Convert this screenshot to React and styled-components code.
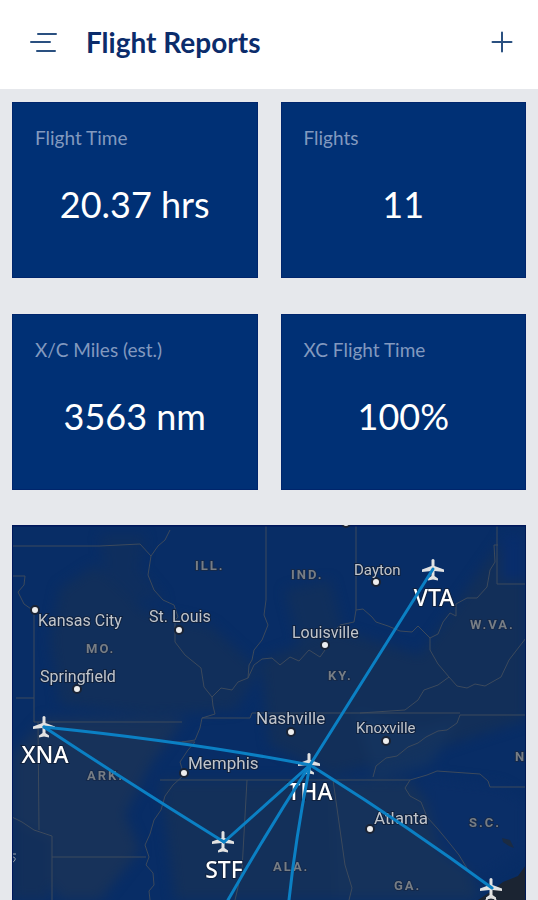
import React from "react";
import styled, { createGlobalStyle } from "styled-components";

const GlobalStyle = createGlobalStyle`
  * { box-sizing: border-box; }
  body {
    margin: 0;
    background: #e6e8ec;
    font-family: Lato, "Open Sans", sans-serif;
  }
`;

const Header = styled.header`
  display: flex;
  align-items: center;
  height: 89px;
  padding: 0 24px 6px 28px;
  background: #fff;
  color: #0b2c6b;
`;

const IconButton = styled.button`
  display: flex;
  padding: 0;
  border: 0;
  background: none;
  color: #2a5080;
  cursor: pointer;
`;

const Title = styled.h1`
  flex: 1;
  margin: 0 0 0 26px;
  font-size: 28px;
  line-height: 32px;
  font-weight: 700;
`;

const Main = styled.main`
  padding: 13px 12px 0;
`;

const Stats = styled.section`
  display: grid;
  grid-template-columns: 1fr 1fr;
  gap: 36px 23px;
  margin-bottom: 35px;
`;

const Card = styled.article`
  min-height: 176px;
  padding: 23px 22px;
  background: #003075;
  border: 1px solid #00256c;
`;

const CardLabel = styled.h2`
  margin: 0;
  color: #8299bf;
  font-size: 19px;
  line-height: 24px;
  font-weight: 400;
`;

const CardValue = styled.p`
  margin: 32px 0 0;
  color: #fff;
  font-size: 36px;
  line-height: 44px;
  text-align: center;
`;

const MapPanel = styled.section`
  overflow: hidden;
  background: #082d66;
`;

const MapCanvas = styled.svg`
  display: block;
  width: 100%;
  height: auto;
`;

const TerrainLayer = styled.g`
  filter: blur(6px);
`;

const Terrain = styled.path`
  fill: ${(p) => p.$fill};
  opacity: ${(p) => p.$opacity || 1};
`;

const Border = styled.path`
  fill: none;
  stroke: #3d4a5c;
  stroke-width: 1px;
  stroke-linejoin: round;
`;

const Route = styled.path`
  fill: none;
  stroke: #0b80c4;
  stroke-width: 3px;
  stroke-linecap: round;
`;

const StateLabel = styled.text`
  fill: #777d84;
  stroke: #14294b;
  stroke-width: 2px;
  paint-order: stroke;
  font: 700 13px Roboto, sans-serif;
  letter-spacing: 2px;
`;

const CityLabel = styled.text`
  fill: #c0c5cc;
  stroke: #10213d;
  stroke-width: 2px;
  paint-order: stroke;
  font: 400 ${(p) => p.$size || 16}px Roboto, sans-serif;
`;

const AirportLabel = styled.text`
  fill: #fff;
  stroke: #10213d;
  stroke-width: 2px;
  paint-order: stroke;
  text-anchor: middle;
  font: 500 23px "Noto Sans", sans-serif;
`;

const CityDot = styled.circle`
  fill: #eee;
  stroke: #1a2334;
  stroke-width: 2px;
`;

const PLANE =
  "M-1.5-10Q0-12 1.5-10V-4L11-0.5V2L1.5 1V6L5 8.500V10.500L0 9.500L-5 10.500V8.500L-1.500 6V1L-11 2V-0.500L-1.500-4Z";

const stats = [
  { label: "Flight Time", value: "20.37 hrs" },
  { label: "Flights", value: "11" },
  { label: "X/C Miles (est.)", value: "3563 nm" },
  { label: "XC Flight Time", value: "100%" },
];

const terrain = [
  { d: "M50 640L60 588L95 565L145 610L210 625L260 670L235 710L150 715L60 705Z", fill: "#112f5b" },
  { d: "M100 535H145L140 570L165 600L130 600L105 575Z", fill: "#112f5b", opacity: 0.7 },
  { d: "M45 718H185L150 765L125 815L140 850L100 900H60L12 820V755Z", fill: "#17325a" },
  { d: "M12 820L50 840V900H12Z", fill: "#122f5a" },
  { d: "M285 590L330 580L345 640L300 650Z", fill: "#143058", opacity: 0.7 },
  { d: "M260 660L340 630L420 655L505 535H526V720L400 760L330 775L270 745Z", fill: "#122f59" },
  { d: "M160 780H330L350 900H175Z", fill: "#13305a" },
  { d: "M330 780H410L460 840L480 900H335Z", fill: "#15325b" },
  { d: "M355 710L420 730L460 718L430 765L375 780Z", fill: "#15345f", opacity: 0.8 },
  { d: "M502 535H524V580H502Z", fill: "#082d6c" },
  { d: "M420 775L500 785L526 800V850L480 880L440 850Z", fill: "#0a2e67" },
];

const water = [
  { d: "M526 865L518 876L503 882L490 892L478 900H526Z", fill: "#1b2432" },
  { d: "M502 838l8 2 4 8-5-2-6-4z", fill: "#1b2b42" },
];

const borders = [
  "M12 546H100L140 544L151 556L158 546L165 540L170 530",
  "M151 556L148 575L154 590L163 600L174 605L178 617",
  "M178 617L175 620V642L185 655L201 668L204 687L212 697L221 688L232 690L238 682L248 678L254 665L262 659L272 658L280 665L290 657L299 661L309 650L320 657L325 650L325 641L340 625L354 622L356 610L363 609L372 617L376 622L388 626L400 631L412 632L418 626L430 638",
  "M12 576H25L24 585L18 592L24 604L34 611V722H182",
  "M16 698H34M38 722L39 830",
  "M266 525V600L264 615L268 625L262 640L254 650L252 660L249 665L248 678",
  "M356 525V610",
  "M430 638L438 634L443 622L450 613L456 616L456 604L467 598L477 598L487 587L490 570L495 562L494 545L498 545",
  "M497 525V584H526",
  "M430 638V650L438 664L449 677L457 686L467 688L475 684L485 686L501 677L509 660L519 647L526 638",
  "M449 677L438 685L424 690L418 700L405 710L360 713H252L250 718H202L200 728L195 740L182 742",
  "M212 697L213 706L215 714L202 718",
  "M172 742H195L188 750L180 762L184 775L173 785L165 796L161 810L154 820L150 834L145 845L149 857L146 865L153 873L154 885L149 891L150 900",
  "M12 817L22 822L34 830L52 836V900M52 857H146",
  "M160 780H410",
  "M247 780L242 870L235 900M333 780L345 865L352 888L349 900",
  "M373 777L376 766L386 758L397 756L408 747L418 743L426 737L438 731L447 730L457 723L460 715H526",
  "M360 713H460M410 780L427 775L437 771L480 774L488 781L490 787H526",
  "M410 780L405 788L410 796L421 802L427 817L437 828L447 840L459 855L468 870",
];

const routes = [
  "M44 727Q190 742 310 765",
  "M44 727Q132 785 224 842",
  "M433 569L310 765",
  "M310 765L224 842",
  "M310 765Q268 830 228 900",
  "M310 765Q296 835 289 900",
  "M310 765Q405 824 492 888",
];

const states = [
  ["ILL.", 195, 570], ["IND.", 291, 579], ["W.VA.", 470, 629], ["MO.", 86, 653],
  ["KY.", 328, 680], ["ARK.", 87, 780], ["ALA.", 273, 871], ["S.C.", 469, 827],
  ["GA.", 394, 890], ["N", 515, 761],
];

const cities = [
  { name: "Kansas City", x: 38, y: 626, dot: [35, 610] },
  { name: "St. Louis", x: 149, y: 622, dot: [179, 630] },
  { name: "Dayton", x: 354, y: 575, dot: [376, 582], size: 15 },
  { name: "Louisville", x: 292, y: 638, dot: [325, 645] },
  { name: "Springfield", x: 40, y: 682, dot: [77, 689], size: 16 },
  { name: "Nashville", x: 256, y: 724, dot: [291, 732], size: 17 },
  { name: "Knoxville", x: 356, y: 733, dot: [386, 741], size: 15 },
  { name: "Memphis", x: 188, y: 769, dot: [184, 773], size: 17 },
  { name: "Atlanta", x: 374, y: 824, dot: [370, 829], size: 17 },
];

const airports = [
  { code: "VTA", x: 433, y: 570 },
  { code: "XNA", x: 44, y: 727 },
  { code: "THA", x: 309, y: 764 },
  { code: "STF", x: 223, y: 842 },
  { x: 491, y: 889 },
];

function FlightMap() {
  return (
    <MapCanvas viewBox="12 525 514 375" role="img" aria-label="Map of flown routes">
      <TerrainLayer>
        {terrain.map((t) => (
          <Terrain key={t.d} d={t.d} $fill={t.fill} $opacity={t.opacity} />
        ))}
      </TerrainLayer>
      {water.map((w) => (
        <Terrain key={w.d} d={w.d} $fill={w.fill} />
      ))}
      {borders.map((d) => (
        <Border key={d} d={d} />
      ))}
      {states.map(([name, x, y]) => (
        <StateLabel key={name} x={x} y={y}>{name}</StateLabel>
      ))}
      {cities.map((c) => (
        <g key={c.name}>
          <CityDot cx={c.dot[0]} cy={c.dot[1]} r="4" />
          <CityLabel x={c.x} y={c.y} $size={c.size}>{c.name}</CityLabel>
        </g>
      ))}
      <path d="M12 854h4M12 857q4 0 3 3t-4 1" fill="none" stroke="#9aa1ab" strokeWidth="1" />
      {airports.map((a) => (
        <g key={`${a.x}-${a.y}`}>
          <path d={PLANE} transform={`translate(${a.x} ${a.y})`} fill="#e2e2e2" />
          {a.code && <AirportLabel x={a.x + 1} y={a.y + 36}>{a.code}</AirportLabel>}
        </g>
      ))}
      <circle cx="491" cy="902" r="5" fill="none" stroke="#ddd" strokeWidth="2" />
      {routes.map((d) => (
        <Route key={d} d={d} />
      ))}
      <path d="M12 900V525.500H526" fill="none" stroke="#00175a" strokeWidth="2" />
      <path d="M525.500 525V900" fill="none" stroke="#001a55" strokeWidth="1" />
      <CityDot cx="346" cy="523" r="4" />
    </MapCanvas>
  );
}

export default function App() {
  return (
    <>
      <GlobalStyle />
      <Header>
        <IconButton aria-label="Open menu">
          <svg width="32" height="24" viewBox="0 0 32 24" fill="none" stroke="currentColor" strokeWidth="2" strokeLinecap="round">
            <path d="M10 4H28M3 12H22M9 21H27" />
          </svg>
        </IconButton>
        <Title>Flight Reports</Title>
        <IconButton aria-label="Add flight">
          <svg width="24" height="24" viewBox="0 0 24 24" fill="none" stroke="currentColor" strokeWidth="2" strokeLinecap="round">
            <path d="M2.500 12H21.500M12 2.500V21.500" />
          </svg>
        </IconButton>
      </Header>
      <Main>
        <Stats>
          {stats.map((s) => (
            <Card key={s.label}>
              <CardLabel>{s.label}</CardLabel>
              <CardValue>{s.value}</CardValue>
            </Card>
          ))}
        </Stats>
        <MapPanel>
          <FlightMap />
        </MapPanel>
      </Main>
    </>
  );
}
